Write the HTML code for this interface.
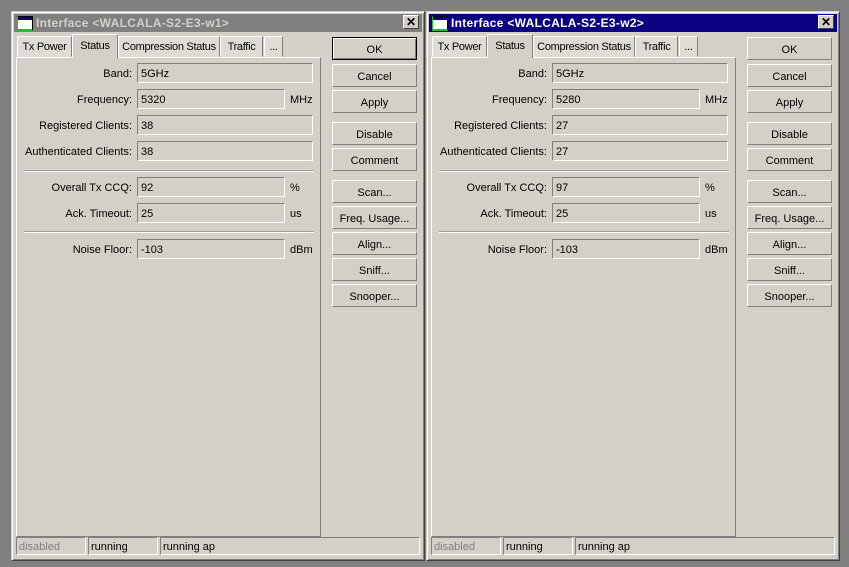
<!DOCTYPE html>
<html><head><meta charset="utf-8"><style>
*{margin:0;padding:0;box-sizing:border-box}
body{width:849px;height:567px;background:#808080;position:relative;overflow:hidden;font-family:"Liberation Sans",sans-serif;font-size:11px;color:#000}
.win{position:absolute;top:11px;width:414px;height:550px;background:#d4d0c8;border:1px solid;border-color:#d4d0c8 #404040 #404040 #d4d0c8;box-shadow:inset 1px 1px 0 #fff,inset -1px -1px 0 #808080}
.win>*{position:absolute}
.tb{left:2px;top:2px;width:408px;height:18px;background:#808080;color:#d4d0c8;font-weight:bold;font-size:12px;line-height:19px;padding-left:22px;letter-spacing:0.3px}
.act .tb{background:#0a0080;color:#fff}
.ico{left:5px;top:4px;width:16px;height:15px;background:#fff;border:1px solid #000;border-bottom:2px solid #20c020;border-left-color:#20c020}
.ico:before{content:"";position:absolute;left:0;top:0;width:14px;height:3px;background:#0a0080}
.cls{left:391px;top:3px;width:16px;height:14px;background:#d4d0c8;border:1px solid;border-color:#fff #404040 #404040 #fff;font-size:12px;line-height:12px;text-align:center;font-weight:bold;color:#000}
.tab{top:24px;height:21px;line-height:21px;text-align:center;color:#000;letter-spacing:-0.3px;background-color:#d4d0c8;background-image:radial-gradient(#fff 0.6px,transparent 0.7px);background-size:2px 2px;border:1px solid;border-color:#fff #808080 transparent #fff}
.tab.on{top:22px;height:24px;line-height:22px;background:#d4d0c8;z-index:2;border-bottom:none}
.panel{left:4px;top:45px;width:305px;height:480px;border:1px solid;border-color:#fff #808080 #808080 #fff}
.lbl{width:120px;text-align:right;height:20px;line-height:22px;left:0}
.fld{left:125px;height:20px;line-height:20px;padding-left:3px;border:1px solid;border-color:#808080 #fff #fff #808080}
.unit{left:278px;height:20px;line-height:22px}
.sep{left:12px;width:290px;height:2px;border-top:1px solid #a0a0a0;border-bottom:1px solid #fff}
.btn{left:320px;width:85px;height:23px;line-height:24px;text-align:center;border:1px solid;border-color:#fff #808080 #808080 #fff}
.btn.def{border:1px solid #000;box-shadow:inset 1px 1px 0 #fff,inset -1px -1px 0 #808080}
.sb{top:525px;height:18px;line-height:19px;padding-left:2px;border:1px solid;border-color:#808080 #fff #fff #808080}
</style></head><body>

<div class="win" style="left:11px">
<div class="tb">Interface &lt;WALCALA-S2-E3-w1&gt;</div><div class="ico"></div><div class="cls">✕</div>
<div class="tab" style="left:5px;width:55px">Tx Power</div>
<div class="tab on" style="left:60px;width:46px">Status</div>
<div class="tab" style="left:106px;width:102px">Compression Status</div>
<div class="tab" style="left:208px;width:43px">Traffic</div>
<div class="tab" style="left:252px;width:19px">...</div>
<div class="panel"></div>
<div class="lbl" style="top:51px">Band:</div><div class="fld" style="top:51px;width:176px">5GHz</div>
<div class="lbl" style="top:77px">Frequency:</div><div class="fld" style="top:77px;width:148px">5320</div><div class="unit" style="top:77px">MHz</div>
<div class="lbl" style="top:103px">Registered Clients:</div><div class="fld" style="top:103px;width:176px">38</div>
<div class="lbl" style="top:129px">Authenticated Clients:</div><div class="fld" style="top:129px;width:176px">38</div>
<div class="sep" style="top:158px"></div>
<div class="lbl" style="top:165px">Overall Tx CCQ:</div><div class="fld" style="top:165px;width:148px">92</div><div class="unit" style="top:165px">%</div>
<div class="lbl" style="top:191px">Ack. Timeout:</div><div class="fld" style="top:191px;width:148px">25</div><div class="unit" style="top:191px">us</div>
<div class="sep" style="top:219px"></div>
<div class="lbl" style="top:227px">Noise Floor:</div><div class="fld" style="top:227px;width:148px">-103</div><div class="unit" style="top:227px">dBm</div>
<div class="btn def" style="top:25px">OK</div>
<div class="btn" style="top:52px">Cancel</div>
<div class="btn" style="top:78px">Apply</div>
<div class="btn" style="top:110px">Disable</div>
<div class="btn" style="top:136px">Comment</div>
<div class="btn" style="top:168px">Scan...</div>
<div class="btn" style="top:194px">Freq. Usage...</div>
<div class="btn" style="top:220px">Align...</div>
<div class="btn" style="top:246px">Sniff...</div>
<div class="btn" style="top:272px">Snooper...</div>
<div class="sb" style="left:4px;width:70px;color:#808080">disabled</div>
<div class="sb" style="left:76px;width:70px">running</div>
<div class="sb" style="left:148px;width:260px">running ap</div>
</div>

<div class="win act" style="left:426px">
<div class="tb">Interface &lt;WALCALA-S2-E3-w2&gt;</div><div class="ico"></div><div class="cls">✕</div>
<div class="tab" style="left:5px;width:55px">Tx Power</div>
<div class="tab on" style="left:60px;width:46px">Status</div>
<div class="tab" style="left:106px;width:102px">Compression Status</div>
<div class="tab" style="left:208px;width:43px">Traffic</div>
<div class="tab" style="left:252px;width:19px">...</div>
<div class="panel"></div>
<div class="lbl" style="top:51px">Band:</div><div class="fld" style="top:51px;width:176px">5GHz</div>
<div class="lbl" style="top:77px">Frequency:</div><div class="fld" style="top:77px;width:148px">5280</div><div class="unit" style="top:77px">MHz</div>
<div class="lbl" style="top:103px">Registered Clients:</div><div class="fld" style="top:103px;width:176px">27</div>
<div class="lbl" style="top:129px">Authenticated Clients:</div><div class="fld" style="top:129px;width:176px">27</div>
<div class="sep" style="top:158px"></div>
<div class="lbl" style="top:165px">Overall Tx CCQ:</div><div class="fld" style="top:165px;width:148px">97</div><div class="unit" style="top:165px">%</div>
<div class="lbl" style="top:191px">Ack. Timeout:</div><div class="fld" style="top:191px;width:148px">25</div><div class="unit" style="top:191px">us</div>
<div class="sep" style="top:219px"></div>
<div class="lbl" style="top:227px">Noise Floor:</div><div class="fld" style="top:227px;width:148px">-103</div><div class="unit" style="top:227px">dBm</div>
<div class="btn" style="top:25px">OK</div>
<div class="btn" style="top:52px">Cancel</div>
<div class="btn" style="top:78px">Apply</div>
<div class="btn" style="top:110px">Disable</div>
<div class="btn" style="top:136px">Comment</div>
<div class="btn" style="top:168px">Scan...</div>
<div class="btn" style="top:194px">Freq. Usage...</div>
<div class="btn" style="top:220px">Align...</div>
<div class="btn" style="top:246px">Sniff...</div>
<div class="btn" style="top:272px">Snooper...</div>
<div class="sb" style="left:4px;width:70px;color:#808080">disabled</div>
<div class="sb" style="left:76px;width:70px">running</div>
<div class="sb" style="left:148px;width:260px">running ap</div>
</div>
</body></html>
